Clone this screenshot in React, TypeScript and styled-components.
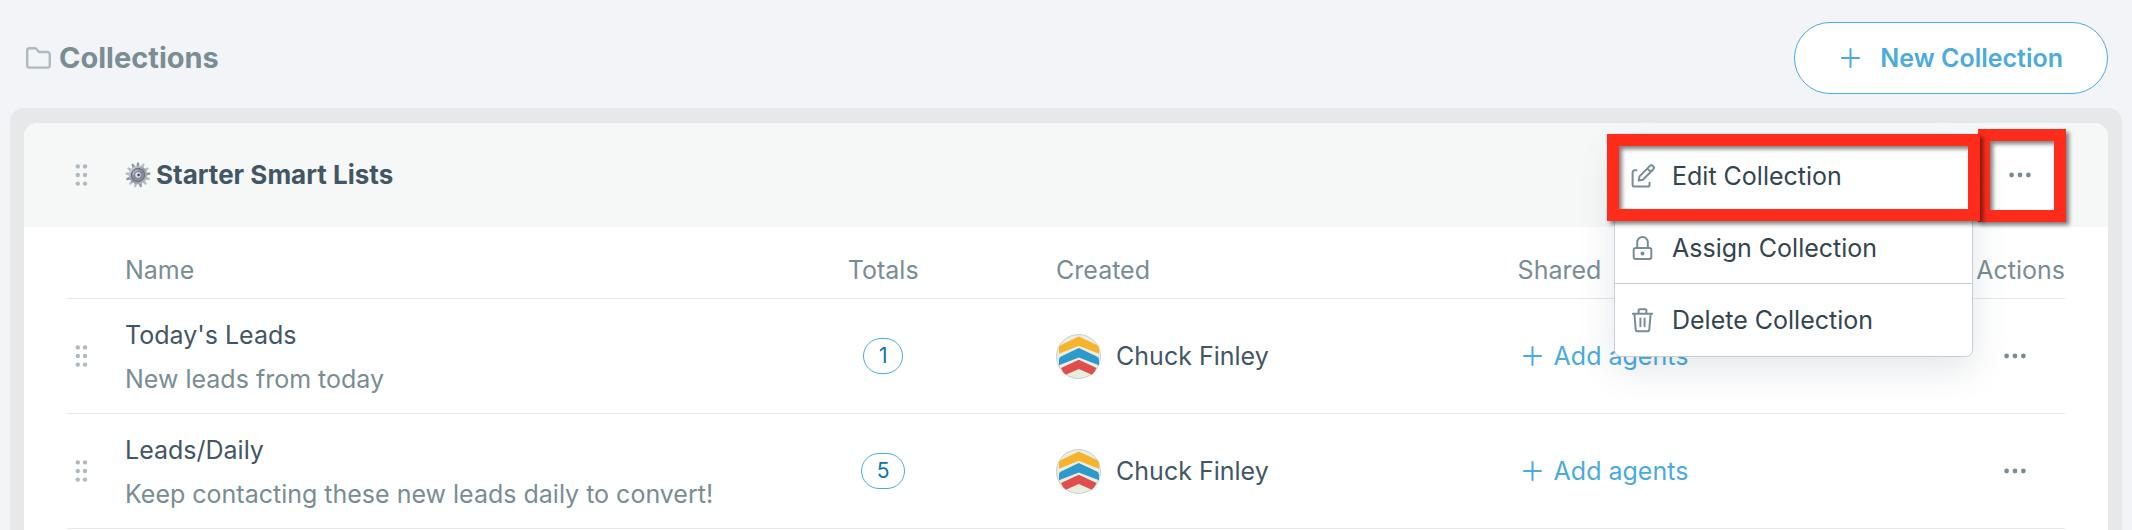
import React from 'react';
import styled, { createGlobalStyle } from 'styled-components';

const color = {
  page: '#f2f4f8',
  panel: '#e7e8ea',
  header: '#f6f8f8',
  line: '#e6e8e9',
  text: '#425664',
  muted: '#7a8d93',
  faint: '#aebac0',
  blue: '#4aabdc',
  deepBlue: '#0b76ab',
  menuText: '#34454f',
  menuLine: '#c8cdd2',
  red: '#ff2c1b',
};

const GlobalStyle = createGlobalStyle`
  *, *::before, *::after { box-sizing: border-box; }
  body {
    margin: 0;
    background: ${color.page};
    color: ${color.text};
    font-family: Inter, "Liberation Sans", sans-serif;
    font-size: 25px;
    line-height: 44px;
  }
  svg { display: block; flex: none; }
`;

const Page = styled.div`
  display: flex;
  flex-direction: column;
  min-height: 100vh;
  padding: 0 10px;
`;

const TopBar = styled.header`
  display: flex;
  align-items: center;
  justify-content: space-between;
  padding: 22px 14px 14px 16px;
`;

const Heading = styled.h1`
  display: flex;
  align-items: center;
  gap: 8px;
  margin: 0;
  color: ${color.muted};
  font-size: 29px;
  font-weight: 700;
`;

const PlainButton = styled.button`
  display: flex;
  align-items: center;
  margin: 0;
  padding: 0;
  border: 0;
  background: none;
  color: inherit;
  font: inherit;
  cursor: pointer;
`;

const NewButton = styled(PlainButton)`
  gap: 20px;
  height: 72px;
  padding: 0 44px 0 46px;
  border: 1px solid ${color.blue};
  border-radius: 36px;
  background: #fff;
  color: ${color.blue};
  font-weight: 600;
`;

const Panel = styled.main`
  display: flex;
  flex: 1;
  padding: 15px 14px 0;
  border-radius: 14px 14px 0 0;
  background: ${color.panel};
`;

const Card = styled.section`
  flex: 1;
  min-width: 0;
  border-radius: 14px 14px 0 0;
  background: #fff;
`;

const CardHeader = styled.div`
  display: flex;
  align-items: center;
  height: 104px;
  padding: 0 52px 0 43px;
  border-radius: 14px 14px 0 0;
  background: ${color.header};
`;

const HandleButton = styled(PlainButton)`
  width: 58px;
  padding-left: 8px;
  color: ${color.faint};
  cursor: grab;
`;

const CardTitle = styled.h2`
  display: flex;
  flex: 1;
  align-items: center;
  gap: 5px;
  margin: 0;
  font-size: 26px;
  font-weight: 700;
`;

const HeaderActions = styled.div`
  position: relative;
`;

const HeaderMoreButton = styled(PlainButton)`
  justify-content: center;
  width: 72px;
  height: 80px;
  background: #fff;
  color: ${color.muted};
`;

const Menu = styled.ul`
  position: absolute;
  top: 4px;
  right: calc(100% + 11px);
  z-index: 2;
  width: 359px;
  margin: 0;
  padding: 0 0 1px;
  border: 1px solid ${color.menuLine};
  border-radius: 7px;
  background: #fff;
  box-shadow: 0 12px 36px rgba(60, 80, 92, 0.14);
  list-style: none;
`;

const MenuItem = styled.li`
  & + & { border-top: 1px solid ${color.menuLine}; }
`;

const MenuButton = styled(PlainButton)`
  gap: 17px;
  width: 100%;
  height: 71px;
  padding: 0 16px;
  color: ${color.menuText};

  svg { color: ${color.muted}; }
`;

const Callout = styled.div<{ $inset: string }>`
  position: absolute;
  inset: ${(p) => p.$inset};
  border: 12px solid ${color.red};
  filter: drop-shadow(3px 3px 2px rgba(0, 0, 0, 0.5));
  pointer-events: none;
`;

const TableArea = styled.div`
  padding: 0 43px;
`;

const Table = styled.table`
  width: 100%;
  border-collapse: separate;
  border-spacing: 0;
  table-layout: fixed;
`;

const Col = styled.col<{ $width?: string }>`
  width: ${(p) => p.$width ?? 'auto'};
`;

type Align = 'left' | 'center' | 'right';

const HeadCell = styled.th<{ $align?: Align; $indent?: boolean }>`
  padding: 21px 0 6px ${(p) => (p.$indent ? 26 : 0)}px;
  border-bottom: 1px solid ${color.line};
  color: ${color.muted};
  font-weight: 400;
  text-align: ${(p) => p.$align ?? 'left'};
`;

const Cell = styled.td<{ $align?: Align; $indent?: boolean }>`
  padding: 0 0 0 ${(p) => (p.$indent ? 26 : 0)}px;
  border-bottom: 1px solid ${color.line};
  text-align: ${(p) => p.$align ?? 'left'};
  vertical-align: middle;
  white-space: nowrap;
`;

const NameCell = styled(Cell)`
  padding: 14px 0 12px;
`;

const Description = styled.div`
  color: ${color.muted};
`;

const Count = styled.span<{ $wide: boolean }>`
  display: flex;
  align-items: center;
  justify-content: center;
  width: ${(p) => (p.$wide ? 44 : 40)}px;
  height: 36px;
  margin: 0 auto;
  border: 1px solid ${color.blue};
  border-radius: 18px;
  color: ${color.deepBlue};
  font-size: 21px;
`;

const Person = styled.div`
  display: flex;
  align-items: center;
  gap: 15px;
`;

const AddAgents = styled(PlainButton)`
  gap: 12px;
  padding-left: 5px;
  color: ${color.blue};
`;

const RowMoreButton = styled(PlainButton)`
  justify-content: center;
  width: 100px;
  height: 44px;
  margin-left: auto;
  color: ${color.muted};
`;

const HandleDots = () => (
  <svg width="13" height="22" viewBox="0 0 13 22" fill="currentColor" aria-hidden="true">
    {[2.4, 11, 19.6].map((y) => (
      <React.Fragment key={y}>
        <circle cx="2.8" cy={y} r="2.2" />
        <circle cx="10" cy={y} r="2.2" />
      </React.Fragment>
    ))}
  </svg>
);

const Handle = ({ label }: { label: string }) => (
  <HandleButton type="button" aria-label={label}>
    <HandleDots />
  </HandleButton>
);

const MoreIcon = () => (
  <svg width="22" height="6" viewBox="0 0 22 6" fill="currentColor" aria-hidden="true">
    <circle cx="2.6" cy="3" r="2.4" />
    <circle cx="11" cy="3" r="2.4" />
    <circle cx="19.4" cy="3" r="2.4" />
  </svg>
);

const PlusIcon = () => (
  <svg width="19" height="20" viewBox="0 0 19 20" fill="none" stroke="currentColor" strokeWidth="2" strokeLinecap="round" aria-hidden="true">
    <path d="M9.5 1v18M1 10h17" />
  </svg>
);

const FolderIcon = () => (
  <svg width="25" height="22" viewBox="0 0 25 22" fill="none" stroke={color.faint} strokeWidth="2.4" strokeLinejoin="round" aria-hidden="true">
    <path d="M1.2 3.5a2.3 2.3 0 0 1 2.3-2.3h5.2q1 0 1.700.8l2.600 3h8.200a2.600 2.600 0 0 1 2.600 2.600v10.600a2.400 2.400 0 0 1-2.400 2.400H3.600a2.400 2.400 0 0 1-2.400-2.400z" />
  </svg>
);

const GearIcon = () => (
  <svg width="26" height="26" viewBox="0 0 26 26" aria-hidden="true">
    <defs>
      <linearGradient id="gear-metal" x1="0" y1="0" x2="1" y2="1">
        <stop offset="0" stopColor="#dbe4ec" />
        <stop offset="0.5" stopColor="#8f95a0" />
        <stop offset="1" stopColor="#c3c4cc" />
      </linearGradient>
    </defs>
    {Array.from({ length: 13 }, (_, i) => (
      <path key={i} d="M11.400 4.400 12.100.5h1.800l.7 3.900z" fill={i % 3 ? '#b3bcc5' : '#9095a0'} transform={`rotate(${(i * 360) / 13} 13 13)`} />
    ))}
    <circle cx="13" cy="13" r="9.200" fill="url(#gear-metal)" />
    <circle cx="13" cy="13" r="6.600" fill="#878d97" stroke="#696e79" strokeWidth="1" />
    <path d="M8.200 13A4.800 4.800 0 0 1 13 8.200" fill="none" stroke="#b4bbc3" strokeWidth="1.400" />
    <circle cx="13" cy="13" r="3.400" fill="#d3e1ec" stroke="#6b717d" strokeWidth="0.8" />
    <circle cx="13.600" cy="13" r="1.200" fill="#39404c" />
  </svg>
);

const menuIconProps = {
  width: 24,
  height: 26,
  viewBox: '0 0 24 26',
  fill: 'none',
  stroke: 'currentColor',
  strokeWidth: 2,
  strokeLinecap: 'round',
  strokeLinejoin: 'round',
  'aria-hidden': true,
} as const;

const EditIcon = () => (
  <svg {...menuIconProps}>
    <path d="M5.4 7.2H3.8a2.2 2.2 0 0 0-2.2 2.2v12a2.2 2.2 0 0 0 2.2 2.2h12.600a2.2 2.2 0 0 0 2.2-2.2v-1.600" />
    <path d="M7.7 17.6l.8-4.2L18.7 3.1a2.35 2.35 0 0 1 3.4 3.4L11.9 16.8zM16.4 5.6l3.3 3.3" />
  </svg>
);

const LockIcon = () => (
  <svg {...menuIconProps}>
    <rect x="2.7" y="13" width="17.6" height="11" rx="2" />
    <path d="M6.2 13V7.2a5.3 5.3 0 0 1 10.6 0V13" />
    <circle cx="11.5" cy="18.4" r="1" fill="currentColor" />
  </svg>
);

const TrashIcon = () => (
  <svg {...menuIconProps}>
    <path d="M1.8 6.8h19.4M7.6 6.6V3.4a1.2 1.2 0 0 1 1.2-1.2h5.4a1.2 1.2 0 0 1 1.2 1.2v3.2M3.4 7l1.3 15.6a1.7 1.7 0 0 0 1.7 1.6h10.2a1.7 1.7 0 0 0 1.7-1.6L19.6 7M9.4 11.4v7.8M13.6 11.4v7.8" />
  </svg>
);

const Avatar = () => (
  <svg width="45" height="45" viewBox="0 0 45 45" aria-hidden="true">
    <circle cx="22.5" cy="22.5" r="22" fill="#ecede1" stroke="#c9ccd2" />
    <path d="M3 14q0-2 2-3L22.800 2.600 41 11q2 1 2 3v5.800L22.800 11.800 3 19.800z" fill="#f6b42c" />
    <path d="M3 25.500q0-2 2-3L22.800 14 41 22.500q2 1 2 3v5.800L22.800 23.400 3 31.300z" fill="#2d9acb" />
    <path d="M5 34 22.800 25.800 40.500 34q-1.500 3.800-4.700 6.800L22.800 35 9.800 40.800Q6.500 37.800 5 34z" fill="#df4d4d" />
  </svg>
);

const lists = [
  { name: "Today's Leads", description: 'New leads from today', total: 1, owner: 'Chuck Finley' },
  { name: 'Leads/Daily', description: 'Keep contacting these new leads daily to convert!', total: 5, owner: 'Chuck Finley' },
];

const menuItems = [
  { label: 'Edit Collection', icon: <EditIcon /> },
  { label: 'Assign Collection', icon: <LockIcon /> },
  { label: 'Delete Collection', icon: <TrashIcon /> },
];

export default function App() {
  return (
    <>
      <GlobalStyle />
      <Page>
        <TopBar>
          <Heading>
            <FolderIcon />
            Collections
          </Heading>
          <NewButton type="button">
            <PlusIcon />
            New Collection
          </NewButton>
        </TopBar>
        <Panel>
          <Card>
            <CardHeader>
              <Handle label="Reorder collection" />
              <CardTitle>
                <GearIcon />
                Starter Smart Lists
              </CardTitle>
              <HeaderActions>
                <HeaderMoreButton type="button" aria-label="Collection actions" aria-expanded="true">
                  <MoreIcon />
                </HeaderMoreButton>
                <Callout $inset="-6px -10px -7px -6px" />
                <Menu>
                  {menuItems.map((item) => (
                    <MenuItem key={item.label}>
                      <MenuButton type="button">
                        {item.icon}
                        {item.label}
                      </MenuButton>
                    </MenuItem>
                  ))}
                  <Callout as="li" $inset="-6px -8px 135px -8px" aria-hidden="true" />
                </Menu>
              </HeaderActions>
            </CardHeader>
            <TableArea>
              <Table>
                <colgroup>
                  <Col $width="58px" />
                  <Col />
                  <Col $width="14.7%" />
                  <Col $width="23.1%" />
                  <Col $width="22.4%" />
                  <Col $width="6.3%" />
                </colgroup>
                <thead>
                  <tr>
                    <HeadCell as="td" />
                    <HeadCell scope="col">Name</HeadCell>
                    <HeadCell scope="col" $align="center">Totals</HeadCell>
                    <HeadCell scope="col" $indent>Created</HeadCell>
                    <HeadCell scope="col" $indent>Shared</HeadCell>
                    <HeadCell scope="col" $align="right">Actions</HeadCell>
                  </tr>
                </thead>
                <tbody>
                  {lists.map((list) => (
                    <tr key={list.name}>
                      <Cell>
                        <Handle label={`Reorder ${list.name}`} />
                      </Cell>
                      <NameCell>
                        <div>{list.name}</div>
                        <Description>{list.description}</Description>
                      </NameCell>
                      <Cell $align="center">
                        <Count $wide={list.total > 1}>{list.total}</Count>
                      </Cell>
                      <Cell $indent>
                        <Person>
                          <Avatar />
                          {list.owner}
                        </Person>
                      </Cell>
                      <Cell $indent>
                        <AddAgents type="button">
                          <PlusIcon />
                          Add agents
                        </AddAgents>
                      </Cell>
                      <Cell>
                        <RowMoreButton type="button" aria-label={`Actions for ${list.name}`}>
                          <MoreIcon />
                        </RowMoreButton>
                      </Cell>
                    </tr>
                  ))}
                </tbody>
              </Table>
            </TableArea>
          </Card>
        </Panel>
      </Page>
    </>
  );
}
